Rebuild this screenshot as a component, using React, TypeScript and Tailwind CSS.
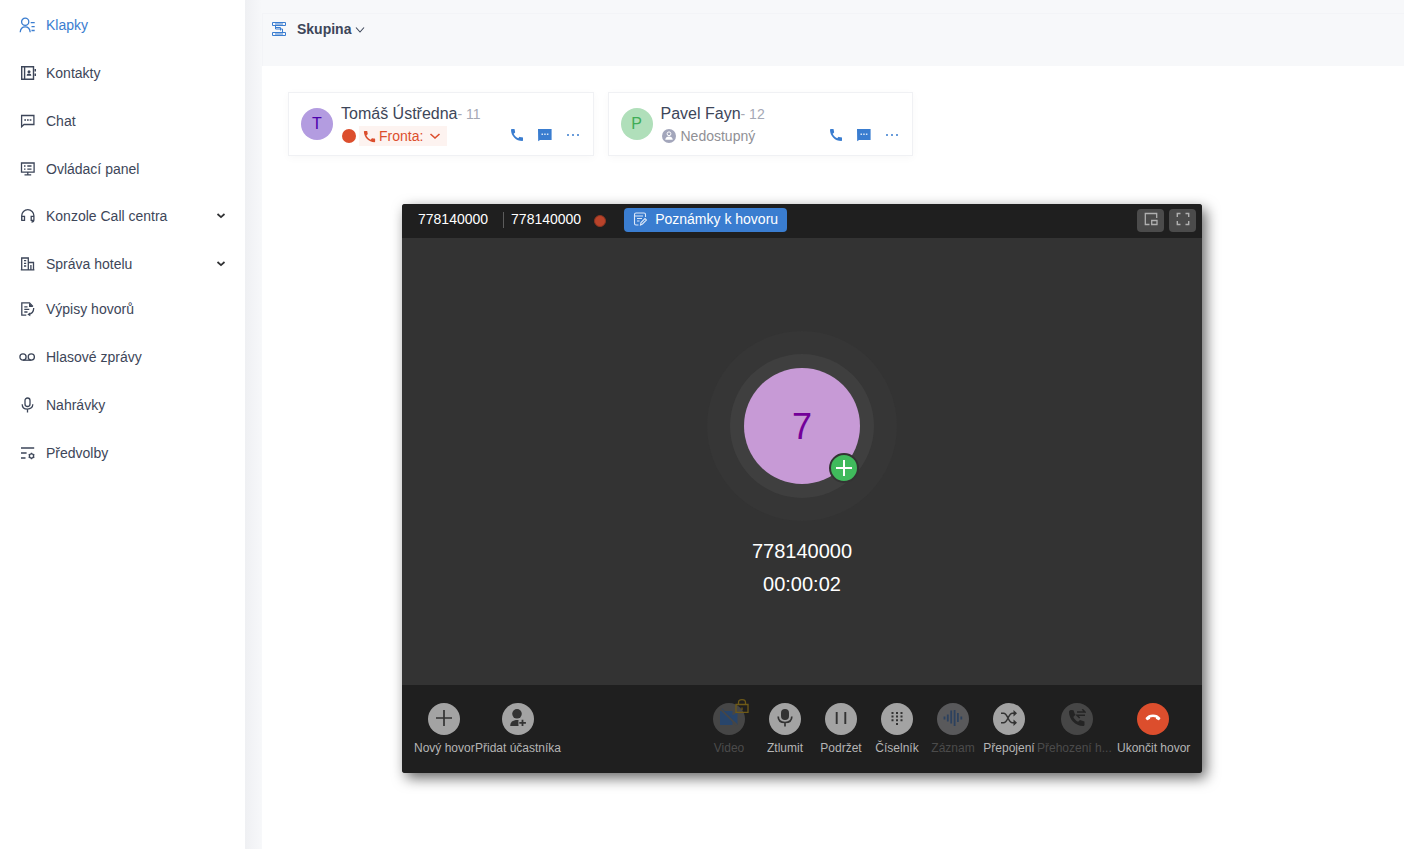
import type { ReactNode } from "react";
import { MdCall } from "react-icons/md";

type SvgProps = { size?: number; box?: number; className?: string; children: ReactNode };

function Svg({ size = 16, box = 16, className, children }: SvgProps) {
  return (
    <svg
      width={size}
      height={size}
      viewBox={`0 0 ${box} ${box}`}
      fill="none"
      stroke="currentColor"
      strokeWidth="1.3"
      className={className}
    >
      {children}
    </svg>
  );
}

const icons = {
  extensions: (
    <Svg className="-ml-px">
      <circle cx="6.2" cy="4.8" r="3.6" />
      <path d="M1.200 15.200c.3-3.400 2.300-5.300 5-5.300s4.700 1.900 5 5.300M11.700 5.700h4M12.500 9.700h3.200M12.500 13.500h3.200" />
    </Svg>
  ),
  contacts: (
    <Svg>
      <path d="M1.700 1.700h11.800v12.600H1.700zM4.600 1.700v12.600" strokeWidth="1.400" />
      <path d="M14.500 4h1.500v2.600h-1.500zM14.500 8.500h1.500v2.600h-1.500zM6.700 10.800c0-1.500.800-2.200 2.300-2.200s2.300.700 2.300 2.200z" fill="currentColor" stroke="none" />
      <circle cx="9" cy="6.700" r="1.500" fill="currentColor" stroke="none" />
    </Svg>
  ),
  chat: (
    <Svg>
      <path d="M1.600 13.800V2.500h12.300v9H4z" />
      <path d="M4.300 6.300h1.700v1.400H4.300zM7 6.300h1.700v1.400H7zM9.700 6.300h1.700v1.400H9.700z" fill="currentColor" stroke="none" />
    </Svg>
  ),
  panel: (
    <Svg>
      <path d="M1.500 2h12.600v9.200H1.500zM7.800 11.200v2.500M4.500 13.800h6.700M7.300 5h4.200M7.300 8.200h4.200M4 5h1.500M4 8.200h1.500" />
    </Svg>
  ),
  headset: (
    <Svg>
      <path d="M1.700 12V7.800a6.100 6.100 0 0 1 12.200 0v3.900c0 1.500-.700 2.300-2.400 2.300M1.800 8.300h2.700v4H1.800zM13.800 8.300h-2.600v4h2.600" />
    </Svg>
  ),
  hotel: (
    <Svg>
      <path d="M1.700 13.800V2h6.600v11.800M8.300 6.500h5.200v7.300M.8 13.900h13.600M4 4.600h2.200M4 7.300h2.200M4 10h2.200M10.900 9v4.800" />
    </Svg>
  ),
  records: (
    <Svg>
      <path d="M6.300 14.200H1.800V1.900h7.700l3.400 3.500M4.300 5.900h3.200M4.300 8.400h5M4.300 11h3.200M13.700 7c0 3.500-1 5.400-4.700 6.500" />
      <path d="M9 2v4h4.300zM7.300 13.500l3-2.200v3.900z" fill="currentColor" stroke="none" />
    </Svg>
  ),
  voicemail: (
    <Svg className="-ml-px">
      <circle cx="4" cy="8" r="3.100" />
      <circle cx="12.300" cy="8" r="3.100" />
      <path d="M4 11.200h8.300" />
    </Svg>
  ),
  mic: (
    <Svg>
      <rect x="5" y="1" width="5" height="8.500" rx="2.500" />
      <path d="M2.200 7.200c0 3 2.200 4.900 5.300 4.900s5.300-1.900 5.300-4.900M7.500 12v3.600" />
    </Svg>
  ),
  prefs: (
    <Svg>
      <path d="M1 3h13.200M1 8h5.600M1 13h4.500" />
      <circle cx="11.500" cy="11" r="2.100" />
      <path d="M11.500 7.800v1.200M11.500 13v1.300M8.700 9.400l1 .6M13.300 12l1 .6M8.700 12.600l1-.6M13.300 10l1-.6" />
    </Svg>
  ),
};

const menu = [
  { label: "Klapky", icon: icons.extensions, row: "text-[#3a7dd0]" },
  { label: "Kontakty", icon: icons.contacts },
  { label: "Chat", icon: icons.chat },
  { label: "Ovládací panel", icon: icons.panel },
  { label: "Konzole Call centra", icon: icons.headset, row: "-mt-px", open: true },
  { label: "Správa hotelu", icon: icons.hotel, open: true },
  { label: "Výpisy hovorů", icon: icons.records, row: "-mt-[3px]" },
  { label: "Hlasové zprávy", icon: icons.voicemail },
  { label: "Nahrávky", icon: icons.mic },
  { label: "Předvolby", icon: icons.prefs },
];

function Sidebar() {
  return (
    <nav className="w-[245px] shrink-0 bg-white pt-px text-[#3d4659]">
      {menu.map((m) => (
        <div key={m.label} className={`flex h-12 items-center pl-5 pr-[19px] ${m.row ?? ""}`}>
          <span className="w-4">{m.icon}</span>
          <span className="ml-2.5 grow">{m.label}</span>
          {m.open && (
            <Svg size={10} box={10} className="text-[#303133]">
              <path d="M1.500 3l3.500 3.200L8.500 3" strokeWidth="1.700" />
            </Svg>
          )}
        </div>
      ))}
    </nav>
  );
}

function ChatFill() {
  return (
    <Svg size={14} box={14} className="text-[#3a7dd0]">
      <path d="M0 1h13.600v11H2L.2 13.200z" fill="currentColor" stroke="none" />
      <path d="M3.500 5.500h1.500v1.400H3.500zM6.200 5.500h1.500v1.400H6.200zM8.900 5.500h1.500v1.400H8.900z" fill="#d8e5f6" stroke="none" />
    </Svg>
  );
}

type CardProps = { letter: string; avatar: string; name: string; ext: string; children: ReactNode };

function ExtensionCard({ letter, avatar, name, ext, children }: CardProps) {
  return (
    <div className="flex h-16 w-[305.5px] border border-[#f0f1f4] bg-white pl-3 pt-[11px] shadow-[0_2px_8px_rgba(0,0,0,0.03)]">
      <div className={`mt-1 flex size-8 shrink-0 items-center justify-center rounded-full text-base ${avatar}`}>
        {letter}
      </div>
      <div className="ml-2 grow">
        <div className="h-[22px] whitespace-nowrap text-base leading-[19px] text-[#3d4659]">
          {name}
          <span className="text-sm leading-[19px] text-[#a5a8b5]">- {ext}</span>
        </div>
        <div className="flex h-5 items-center">
          {children}
          <div className="-mt-0.5 ml-auto mr-[13px] flex items-center gap-[13px] text-[#3a7dd0]">
            <MdCall size={16} />
            <ChatFill />
            <Svg size={14} box={14} className="ml-px">
              <path d="M1 6.200h2v1.600H1zM6 6.200h2v1.600H6zM11 6.200h2v1.600h-2z" fill="currentColor" stroke="none" />
            </Svg>
          </div>
        </div>
      </div>
    </div>
  );
}

type ActionProps = { label: string; width: string; circle?: string; text?: string; children: ReactNode };

function Action({ label, width, circle = "bg-[#a3a3a3] text-[#333]", text = "text-[#b5b5b5]", children }: ActionProps) {
  return (
    <div className={`flex flex-col items-center ${width}`}>
      <div className={`relative flex size-8 items-center justify-center rounded-full pb-0.5 ${circle}`}>{children}</div>
      <span className={`mt-[5px] whitespace-nowrap text-xs leading-[16px] ${text}`}>{label}</span>
    </div>
  );
}

const disabled = "text-[#4b4b4b]";

function CallWindow() {
  return (
    <section className="absolute left-[402px] top-[204px] flex h-[569px] w-[800px] flex-col overflow-hidden rounded-[3px] bg-[#333] text-white">
      <header className="flex h-[34px] shrink-0 items-center bg-[#1f1f1f] pl-4 pr-[6px]">
        <span className="-mt-1">778140000</span>
        <span className="-mt-[3px] ml-[15px] h-4 w-px bg-[#5c5c5c]" />
        <span className="-mt-1 ml-[7px]">778140000</span>
        <span className="ml-[13px] size-3 rounded-full border border-[#8c3521] bg-[#b9432a]" />
        <button className="-mt-[2px] ml-[18px] flex h-6 w-[163px] items-center rounded-sm bg-[#3a7dd0] pb-0.5 pl-[9px]">
          <Svg size={14} box={14} className="text-[#dce8f8]">
            <path
              d="M12.500 5V2.500c0-1-.500-1.500-1.500-1.500H3c-1 0-1.500.5-1.500 1.500v9c0 1 .5 1.500 1.500 1.500h2.500M1 4h9M4 6.500h5M4 9h2.500M7.500 13l.5-2.500 4-4 1.500 1.500-4 4z"
              strokeWidth="1.100"
            />
          </Svg>
          <span className="ml-2 whitespace-nowrap">Poznámky k hovoru</span>
        </button>
        <div className="ml-auto flex gap-[5px] pb-px text-[#b0b0b0]">
          <div className="flex h-[23px] w-[27px] items-center justify-center rounded-sm bg-[#4b4b4b] pb-[3px]">
            <Svg size={14} box={14}>
              <path d="M5.500 12.500H1.300V1.500h11.400V6M7.700 8.500H13v4H7.700z" strokeWidth="1.300" />
            </Svg>
          </div>
          <div className="flex h-[23px] w-[27px] items-center justify-center rounded-sm bg-[#4b4b4b] pb-[3px]">
            <Svg size={14} box={14}>
              <path d="M1.300 5V1.500H4.500M9.500 1.500h3.200V5M12.700 9v3.500H9.500M4.500 12.500H1.300V9" strokeWidth="1.400" />
            </Svg>
          </div>
        </div>
      </header>

      <div className="flex grow flex-col items-center pt-[93px]">
        <div className="flex size-[190px] shrink-0 items-center justify-center rounded-full bg-[#363636]">
          <div className="flex size-36 items-center justify-center rounded-full bg-[#3f3f3f]">
            <div className="relative flex size-[116px] items-center justify-center rounded-full bg-[#c79ad6] pt-px text-[36px] text-[#730099]">
              7
              <div className="absolute bottom-px right-px flex size-[30px] items-center justify-center rounded-full border-2 border-[#333] bg-[#40ba5c] text-white">
                <Svg size={16}>
                  <path d="M8 0v16M0 8h16" strokeWidth="2" />
                </Svg>
              </div>
            </div>
          </div>
        </div>
        <div className="mt-[14px] text-center text-xl leading-[33px]">
          <div>778140000</div>
          <div>00:00:02</div>
        </div>
      </div>

      <footer className="flex h-[88px] shrink-0 bg-[#1f1f1f] px-3 pt-[18px]">
        <div className="flex w-[61px] flex-col">
          <div className="ml-[14px] flex size-8 items-center justify-center rounded-full bg-[#a3a3a3] pb-0.5 text-[#333]">
            <Svg size={18} box={18}>
              <path d="M9 1v16M1 9h16" strokeWidth="1.700" />
            </Svg>
          </div>
          <span className="mt-[5px] whitespace-nowrap text-xs leading-[16px] text-[#b5b5b5]">Nový hovor</span>
        </div>
        <Action label="Přidat účastníka" width="w-[86px]">
          <Svg size={18} box={18}>
            <g fill="currentColor" stroke="none">
              <circle cx="8" cy="4.800" r="4.800" />
              <path d="M1.200 17c0-4 2.500-6.300 8.300-6v6z" />
            </g>
            <path d="M13.500 10.200v7.300M9.800 13.900h7.400" stroke="#a3a3a3" strokeWidth="4" />
            <path d="M13.500 10.700v6.400M10.300 13.900h6.600" strokeWidth="1.800" />
          </Svg>
        </Action>

        <div className="ml-auto flex">
          <Action label="Video" width="w-14" circle="bg-[#464646] text-[#28456b]" text={disabled}>
            <Svg size={20} box={20} className="shrink-0">
              <path d="M1 3h12.500v4.500l5-3v11l-5-3V17H1z" fill="currentColor" stroke="none" />
              <path d="M1.500 1l17 16.500" stroke="#464646" strokeWidth="1.800" />
              <path d="M2.800.5l16 15.700" strokeWidth=".8" />
            </Svg>
            <Svg size={14} box={14} className="absolute -right-[4px] -top-[4px] text-[#6f5a17]">
              <path d="M1 5.500h12v7.800H1zM3.500 5.500V3.500C3.500 1.500 4.800.7 7 .7s3.500.8 3.500 2.800v2M7 8.500v2.500" />
            </Svg>
          </Action>
          <Action label="Ztlumit" width="w-14">
            <Svg size={18} box={18}>
              <rect x="5" y="0" width="8" height="11" rx="4" fill="currentColor" stroke="none" />
              <path d="M2.200 7.500c0 4 2.500 6 6.800 6s6.800-2 6.800-6M9 13.500v4" strokeWidth="1.700" />
            </Svg>
          </Action>
          <Action label="Podržet" width="w-14">
            <Svg size={16}>
              <path d="M3.700 2v12M12.300 2v12" strokeWidth="1.900" />
            </Svg>
          </Action>
          <Action label="Číselník" width="w-14">
            <Svg size={14} box={14}>
              <path
                d="M1.500 1h2v2h-2zM6 1h2v2H6zM10.500 1h2v2h-2zM1.500 4.500h2v2h-2zM6 4.500h2v2H6zM10.500 4.500h2v2h-2zM1.500 8.200h2v2h-2zM6 8.200h2v2H6zM10.500 8.200h2v2h-2zM6 12h2v2H6z"
                fill="currentColor"
                stroke="none"
              />
            </Svg>
          </Action>
          <Action label="Záznam" width="w-14" circle="bg-[#59595b] text-[#2c415e]" text={disabled}>
            <Svg size={20} box={20}>
              <path d="M1.500 8.500v3M4.800 6.500v7M8.200 2.500v13M11.600 2v16M14.900 5v9M18.300 8.500v3" strokeWidth="1.800" />
            </Svg>
          </Action>
          <Action label="Přepojení" width="w-14">
            <Svg size={16}>
              <path d="M0 3.200h2.500c4.500 0 4.500 9.600 9 9.600h3M0 12.800h2.500c4.500 0 4.500-9.600 9-9.600h3" strokeWidth="1.500" />
              <path d="M12.500 0l3.500 3.200-3.500 3.200zM12.500 9.600l3.500 3.200-3.500 3.200z" fill="currentColor" stroke="none" />
            </Svg>
          </Action>
          <div className="flex w-20 flex-col">
            <div className="ml-6 flex size-8 items-center justify-center rounded-full bg-[#464646] pb-0.5 text-[#242424]">
              <Svg size={18} box={18}>
                <path
                  d="M3 1l2.500.3L7.200 6 5.300 8c1.100 2.200 2.600 3.700 4.800 4.800l1.900-1.900 4.500 1.500v3.300c0 .800-.7 1.300-1.500 1.300C7.500 17 1 10.500 1 3c0-1 .5-2 2-2z"
                  fill="currentColor"
                  stroke="none"
                />
                <path d="M9 3h8l-2.700-2.700M17 6.300H9L11.700 9" strokeWidth="1.500" />
              </Svg>
            </div>
            <span className="mt-[5px] whitespace-nowrap text-xs leading-[16px] text-[#4b4b4b]">Přehození h...</span>
          </div>
          <div className="flex w-[73px] flex-col">
            <div className="ml-5 flex size-8 items-center justify-center rounded-full bg-[#dc4e2d] pb-[3px] text-white">
              <Svg size={16}>
                <path
                  d="M8 4.400c3.200 0 5.600 1.200 7.200 3.300.3.400.3.800 0 1.100l-1 1.200c-.3.300-.8.300-1.200.1l-1.700-1c-.3-.2-.4-.4-.4-.7l0-.8C9 6.900 7 6.900 5.100 7.600l0 .8c0 .3-.1.500-.4.700l-1.700 1c-.4.200-.9.200-1.200-.1L.8 8.800c-.3-.3-.3-.7 0-1.100C2.400 5.600 4.800 4.400 8 4.400z"
                  fill="currentColor"
                  stroke="none"
                />
              </Svg>
            </div>
            <span className="mt-[5px] whitespace-nowrap text-xs leading-[16px] text-[#b5b5b5]">Ukončit hovor</span>
          </div>
        </div>
      </footer>
    </section>
  );
}

export default function App() {
  return (
    <div className="relative flex h-[849px] w-[1404px] overflow-hidden bg-[#f7f8fa] font-['Liberation_Sans',Arial,sans-serif] text-sm">
      <Sidebar />
      <div className="w-[17px] shrink-0 bg-linear-to-r from-[#eff0f3] to-[#f7f8fa]" />
      <main className="flex grow flex-col pt-[13px]">
        <div className="flex h-[53px] items-start border-l border-t border-[#f3f4f7] pl-[8px] pt-[6px]">
          <Svg className="mt-px text-[#3a7dd0]">
            <path
              d="M1.500 1.500h13v3h-13zM1.500 11.500h13v3h-13zM4.500 4.500v3.500h7v3.500M4 3h8M4 13h8M5 6.500h4.500v3"
              strokeWidth="1"
            />
          </Svg>
          <span className="ml-[10px] font-bold leading-[18px] text-[#3d4659]">Skupina</span>
          <Svg size={12} box={12} className="ml-[3px] mt-[4px] text-[#3d4659]">
            <path d="M2 3.500l4 4.500 4-4.500" strokeWidth="1.100" />
          </Svg>
        </div>
        <div className="flex grow items-start gap-[14px] bg-white pl-[26px] pt-[26px]">
          <ExtensionCard letter="T" avatar="bg-[#b39ce0] text-[#4b00ad]" name="Tomáš Ústředna" ext="11">
            <span className="ml-px size-[14px] rounded-full bg-[#dc4e2d]" />
            <span className="ml-[3px] flex h-5 w-[88px] items-center bg-[#fdf3f0] pl-[3px] text-[#dc4e2d]">
              <MdCall size={15} />
              <span className="ml-[2px]">Fronta:</span>
              <Svg size={12} box={12} className="ml-[6px]">
                <path d="M1.500 4l4.500 4 4.500-4" strokeWidth="1.600" />
              </Svg>
            </span>
          </ExtensionCard>
          <ExtensionCard letter="P" avatar="bg-[#b0dfba] text-[#40ad57]" name="Pavel Fayn" ext="12">
            <Svg size={14} box={14} className="ml-px text-[#a3a6bb]">
              <circle cx="7" cy="7" r="7" fill="currentColor" stroke="none" />
              <circle cx="7" cy="4.800" r="1.900" stroke="#fff" strokeWidth="1" />
              <path d="M3.200 10.800c.4-2.300 1.700-3.300 3.800-3.300s3.400 1 3.800 3.300z" fill="#fff" stroke="none" />
            </Svg>
            <span className="ml-[5px] text-[#909095]">Nedostupný</span>
          </ExtensionCard>
        </div>
      </main>
      <div className="absolute left-[402px] top-[204px] h-[569px] w-[800px] rounded-[3px] shadow-[4px_5px_14px_rgba(0,0,0,0.6)]" />
      <CallWindow />
    </div>
  );
}
